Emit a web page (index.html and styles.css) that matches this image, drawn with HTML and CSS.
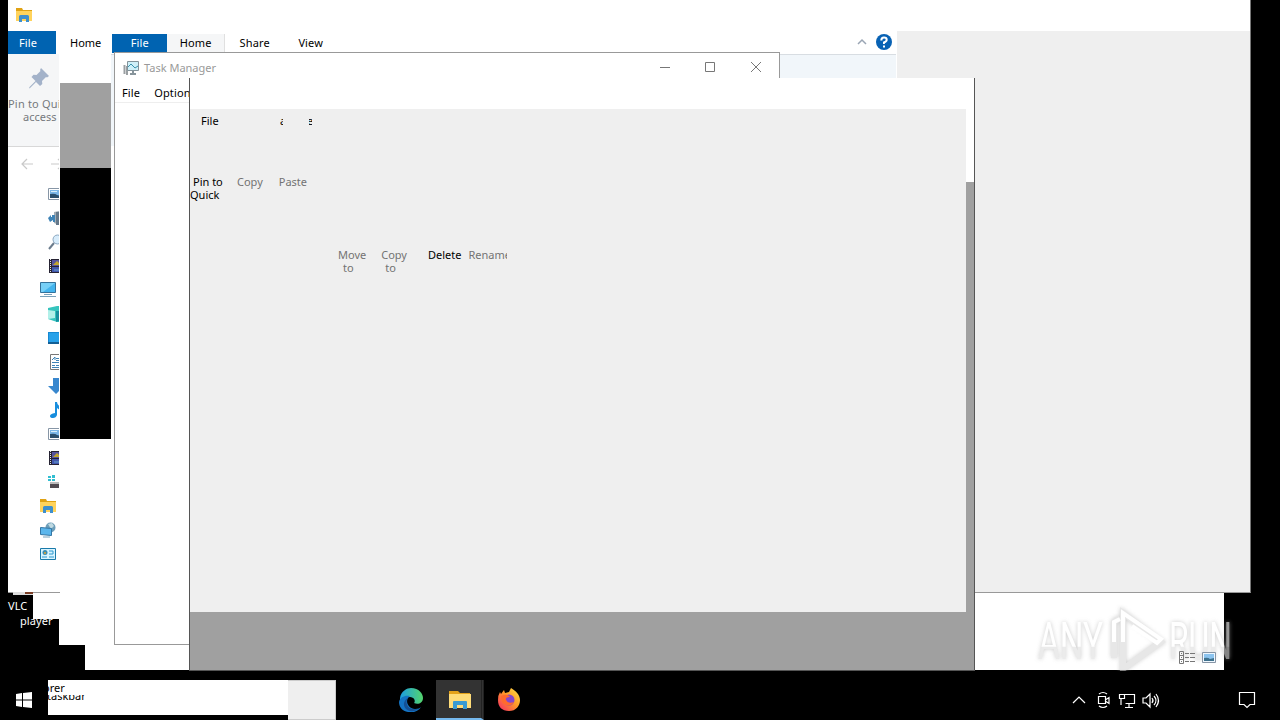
FILE: index.html
```html
<!DOCTYPE html>
<html lang="en">
<head>
<meta charset="utf-8">
<title>Desktop</title>
<link rel="stylesheet" href="styles.css">
</head>
<body>
<svg class="defs" width="0" height="0">
  <defs>
    <symbol id="folder" viewBox="0 0 16 16"><path d="M0 1h6l1 2h9v3H0z" fill="#e0a213"/><path d="M0 4h16v10H0z" fill="#ffd35c"/><path d="M3 15V9.500q0-1.500 1.500-1.500h7q1.500 0 1.500 1.500V15h-3v-3H6v3z" fill="#3e8fcd"/></symbol>
    <symbol id="picture" viewBox="0 0 16 16"><path d="M.5 2.500h15v11H.5z" fill="#fff" stroke="#8796a6"/><path d="M2 4h12v8H2z" fill="#79b6e8"/><path d="M2 8q5-1 7 1l5 1v2H2z" fill="#294e6c"/><path d="M3 5h6v1H3z" fill="#d9effa"/></symbol>
    <symbol id="film" viewBox="0 0 16 16"><path d="M1 1h15v14H1z" fill="#262333"/><path d="M2.500 1v14" stroke="#e8e8e8" stroke-dasharray="1 1"/><path d="M4 2h10v6H4z" fill="#56549d"/><path d="M4 9h10v5H4z" fill="#4257ad"/><path d="M5 7l4-4 4 4z" fill="#c1a52c"/><path d="M6 12h5" stroke="#65a2ce"/></symbol>
  </defs>
</svg>
<main class="desktop">
  <div class="shortcut"><svg class="cone" viewBox="0 0 20 3"><path d="M0 0h20v3H0z" fill="#ddd"/><path d="M12 0h8v2h-8z" fill="#7b3e25"/></svg><span class="name">VLC</span><span class="name second">player</span></div>
  <div class="trail trail-a"></div><div class="trail trail-b"></div><div class="trail trail-c"></div>

  <section class="window explorer">
    <header class="titlebar"><svg class="i16" viewBox="0 0 16 16"><use href="#folder"/></svg></header>
    <div class="body">
      <aside class="side">
        <div class="tab file">File</div>
        <div class="pin"><svg viewBox="0 0 22 22"><path d="M13 1l8 8-2 1.500-1-.5-4 4 .3 3-2.300 2-4-4-6 6-1 .5.500-1.500 6-6L3.500 10l2-2.300 3 .3 4-4-.5-1z" fill="#a3b2c9"/></svg><span>Pin to Quick</span><span class="low">access</span></div>
        <div class="history"><svg viewBox="0 0 52 12"><path d="M13 6H2M7 1L2 6l5 5M31 6h12M38 1l5 5-5 5" fill="none" stroke="#c9c9c9" stroke-width="1.200"/></svg></div>
        <ul class="tree">
          <li class="in"><svg viewBox="0 0 16 16"><use href="#picture"/></svg></li>
          <li class="in"><svg viewBox="0 0 16 16"><path d="M6 2l5-1v14l-5-2z" fill="#a3adb5"/><path d="M8 2h3v13H8z" fill="#64788a"/><path d="M0 8l3-3v2h1V5h3v7H5v-2l-3 2z" fill="#3e83b6"/></svg></li>
          <li class="in"><svg viewBox="0 0 16 16"><path d="M1 15l5-6" stroke="#6b7c8d" stroke-width="2"/><circle cx="9.500" cy="5.500" r="4.500" fill="#d7ecfb" stroke="#8ba7c0"/></svg></li>
          <li class="in"><svg viewBox="0 0 16 16"><use href="#film"/></svg></li>
          <li><svg viewBox="0 0 16 16"><path d="M.5.500h15v10H.5z" fill="#44b4ed" stroke="#35729b"/><path d="M1 1h14L3 10H1z" fill="#77d0f7"/><path d="M4 12.500h8M0 14.500h16" stroke="#79a1ba"/></svg></li>
          <li class="in"><svg viewBox="0 0 16 16"><path d="M0 2l9-2h4v16H9l-9-3z" fill="#35c4bd"/><path d="M0 4l7 1v7l-7 1z" fill="#b2f0e9"/><path d="M8 5h8v8l-8 3z" fill="#168f9f"/></svg></li>
          <li class="in"><svg viewBox="0 0 16 16"><path d="M0 2h16v12H0z" fill="#1688d2"/><path d="M1 3h10v9H1z" fill="#28a1e9"/><path d="M0 13h16" stroke="#135f95" stroke-width="2"/></svg></li>
          <li class="in"><svg viewBox="0 0 16 16"><path d="M2.500.5h12v15h-12z" fill="#fff" stroke="#777"/><path d="M4 6l3-3v3M8 4.500h5M8 6.500h5M4 8.500h8M4 11.500h3M8 11.500h5M4 13.500h8" fill="none" stroke="#3e83b6"/></svg></li>
          <li class="in"><svg viewBox="0 0 16 16"><path d="M5 0h6v8h5l-8 8-8-8h5z" fill="#3887ce"/></svg></li>
          <li class="in"><svg viewBox="0 0 16 16"><path d="M7 0h2q0 3 4 5v4L9 6v7q-1 3-4 3-3 0-3-2t5-3z" fill="#178ddd"/></svg></li>
          <li class="in"><svg viewBox="0 0 16 16"><use href="#picture"/></svg></li>
          <li class="in"><svg viewBox="0 0 16 16"><use href="#film"/></svg></li>
          <li class="in"><svg viewBox="0 0 16 16"><path d="M0 2h3v2H0zM4 1h3v3H4zM0 5h3v2H0zM4 5h3v2H4z" fill="#31bed1"/><path d="M2 8h14v3H2z" fill="#bbb"/><path d="M2 10h14v4H2z" fill="#514b50"/></svg></li>
          <li><svg viewBox="0 0 16 16"><use href="#folder"/></svg></li>
          <li><svg viewBox="0 0 16 16"><circle cx="10.500" cy="5.500" r="5" fill="#6d9eb9"/><path d="M8 2l4-1 2 3-3 3z" fill="#c0dae2"/><path d="M.5 5.500l11 1v7l-11-1z" fill="#5bb6ec" stroke="#3376a5"/><path d="M3 15h7" stroke="#78a3bc"/></svg></li>
          <li><svg viewBox="0 0 16 16"><path d="M.5 2.500h15v11H.5z" fill="#d9f4ff" stroke="#1a7aaa"/><circle cx="5" cy="6.500" r="2.500" fill="#398db4"/><circle cx="5" cy="7" r="1" fill="#e5a52d"/><path d="M2 11h5M9 5h4v3H9M9 11h5" fill="none" stroke="#2e9ad0"/></svg></li>
        </ul>
      </aside>
      <div class="blank"></div>
    </div>
  </section>

  <div class="ghost"><div class="ghost-tab">Home</div><div class="ghost-grey"></div><div class="ghost-black"></div><div class="ghost-white"></div></div>
  <section class="window ribbon">
    <nav class="tabs"><span class="tab file">File</span><span class="tab home">Home</span><span class="tab share">Share</span><span class="tab view">View</span>
      <svg class="help" viewBox="0 0 42 18"><path d="M3 10l4-4 4 4" fill="none" stroke="#9aa5b4" stroke-width="1.500"/><circle cx="29" cy="8" r="8" fill="#0862b4"/><path d="M26.300 6.500q0-3 2.700-3t2.700 2.300Q31.700 7.500 29 8.500V10M29 11.500v2" fill="none" stroke="#fff" stroke-width="2"/></svg></nav>
    <div class="strip"></div>
  </section>

  <section class="window taskman">
    <header class="tm-title"><svg class="tm-icon" viewBox="0 0 17 16"><path d="M1.500 5v9M4 6v9" fill="none" stroke="#9a9fa2" stroke-width="2"/><path d="M4.500 1.500h11v9h-11z" fill="#cef0f9" stroke="#82939b"/><path d="M5 7l3-3 4 4 3-2" fill="none" stroke="#3891ad"/><path d="M10 11v3M7 14h6" stroke="#87949b" stroke-width="2"/></svg><span>Task Manager</span>
      <svg class="controls" viewBox="0 0 104 12"><path d="M1 6.500h10M46.500 1.500h9v9h-9zM92 1l10 10M102 1L92 11" fill="none" stroke="#777"/></svg></header>
    <nav class="tm-menu"><span>File</span><span>Options</span></nav>
  </section>

  <section class="window front">
    <header class="front-title"></header>
    <div class="front-body">
      <div class="commands">
        <div class="row first"><span class="cmd">File</span><span class="bit bit-a"><b>a</b></span><span class="bit bit-e"><b>e</b></span></div>
        <div class="row second"><span class="cmd pinq">Pin to<br><i>Quick</i></span><span class="cmd off">Copy</span><span class="cmd off paste">Paste</span></div>
        <div class="row third"><span class="cmd off">Move<br><i>to</i></span><span class="cmd off copyto">Copy<br><i>to</i></span><span class="cmd del">Delete</span><span class="cmd off ren">Rename</span></div>
      </div>
      <div class="edge"></div>
    </div>
    <footer class="front-foot"></footer>
  </section>

  <svg class="watermark" viewBox="0 0 210 72">
    <defs><linearGradient id="fade" x1="0" y1="0" x2="0" y2="1"><stop offset=".58" stop-color="#fff"/><stop offset=".6" stop-color="#dedede"/></linearGradient></defs>
    <g class="letters"><text x="6" y="55" textLength="65" lengthAdjust="spacingAndGlyphs">ANY</text><text x="137" y="55" textLength="63" lengthAdjust="spacingAndGlyphs">RUN</text></g>
    <g class="play"><path d="M82 54V18l6-4M91 9v56l38-27z"/></g>
    <path class="play-line" d="M82 38V18l6-3M91 38V9l38 26-4 4-25-17"/>
  </svg>
  <svg class="views" viewBox="0 0 38 14"><path d="M.5.500h4v12h-4zM.5 4.500h4M.5 8.500h4M2 2.500h1M2 6.500h1M2 10.500h1M6 2.500h4M11 2.500h5M6 6.500h4M11 6.500h5M6 10.500h4M11 10.500h5" fill="none" stroke="#777"/><path d="M23.500 1.500h13v10h-13z" fill="#eef7ff" stroke="#8795a5"/><path d="M25 3h10v7H25z" fill="#8cc4ef"/><path d="M25 7q4-1 6 1l4-1v3H25z" fill="#3e718d"/></svg>

  <footer class="taskbar">
    <svg class="start" viewBox="0 0 16 16"><path d="M0 2l6-1v6.500H0zM7 1l9-1v7.500H7zM0 8.500h6V15l-6-1zM7 8.500h9V16l-9-1z" fill="#fff"/></svg>
    <div class="tip"><span class="t1">orer</span><span class="t2"><b>taskbar</b></span></div><div class="tip-end"></div>
    <svg class="edge-icon" viewBox="0 0 24 24"><defs><linearGradient id="eg" x1="0" x2="1"><stop stop-color="#1b9de2"/><stop offset="1" stop-color="#54d56c"/></linearGradient></defs><path d="M1 10C2 3 8 0 12 0c8 0 12 6 12 10 0 5-5 7-9 5 2-2 0-6-4-6-5 0-9 3-10 6z" fill="url(#eg)"/><path d="M0 14c1-5 6-7 11-6-6 4-2 13 5 13 3 0 5-1 6-2-3 5-9 6-13 5-6-1-9-5-9-10z" fill="#1474c4"/><path d="M9 10c-4 5 0 13 10 11-6 5-15 1-14-6 1-3 2-4 4-5z" fill="#155094"/></svg>
    <div class="task-active"><svg viewBox="0 0 22 18"><path d="M0 0h9l2 2h10v4H0z" fill="#e4a21a"/><path d="M0 3h22v14H0z" fill="#ffdc78"/><path d="M4 18v-7q0-1 1-1h12q1 0 1 1v7h-4v-4H8v4z" fill="#399bd2"/></svg></div>
    <svg class="fox" viewBox="0 0 24 24"><defs><linearGradient id="ff" x1="1" y1="0" x2="0" y2="1"><stop stop-color="#ffe64b"/><stop offset=".45" stop-color="#ff9b28"/><stop offset="1" stop-color="#f52667"/></linearGradient></defs><path d="M3 4l1 2 3-4 1 3 4-1 2-4c5 3 9 7 9 12 0 6-4 11-11 11C5 23 1 19 1 12q0-5 2-8z" fill="url(#ff)"/><circle cx="12" cy="12" r="5.500" fill="#8547cc"/><path d="M4 8q6-3 9 1-5 0-4 3 2 4 8 2-3 5-8 3-5-2-5-9z" fill="#ff6b2d"/></svg>
    <svg class="tray" viewBox="0 0 92 22"><g fill="none" stroke="#fff" stroke-width="1.200"><path d="M1 14l6-6 6 6M27 5q4-3 8 0M27 17q4 3 8 0M26.500 7.500h7v7h-7zM34 10.500l3-2v6l-3-2M50.500 5.500h12v9h-9M57 15v3M53 18.500h8M47.500 5.500h5v4h-5zM49 10v6M71 9h3l4-4v13l-4-4h-3zM80 9q2 2.500 0 5M82 7q4 4.500 0 9M84 5q5 6.500 0 13"/></g></svg>
    <svg class="note" viewBox="0 0 18 18"><path d="M1.500 1.500h15v12H12l-3 3-3-3H1.500z" fill="none" stroke="#fff" stroke-width="1.200"/></svg>
  </footer>
</main>
</body>
</html>
```
FILE: styles.css
```css
* { box-sizing: border-box; }
body { margin: 0; font: 11px/13px "Noto Sans", "Open Sans", sans-serif; color: #000; }
i { font-style: normal; }
svg { display: block; flex: none; }
.defs { position: absolute; }
.desktop { position: relative; width: 1280px; height: 720px; overflow: hidden; background: #000; }
.window { position: absolute; overflow: hidden; background: #fff; }

.shortcut { position: absolute; left: 8px; top: 592px; width: 52px; color: #fff; z-index: 1; }
.cone { width: 20px; height: 3px; margin-left: 5px; }
.name { display: block; padding-top: 4px; letter-spacing: .1px; }
.second { padding: 2px 0 0 12px; }
.trail { position: absolute; background: #fff; }
.trail-a { left: 33px; top: 590px; width: 40px; height: 29px; }
.trail-b { left: 59px; top: 590px; width: 60px; height: 55px; }
.trail-c { left: 85px; top: 590px; width: 1139px; height: 80px; }

.explorer { left: 8px; top: 0; width: 1243px; height: 593px; border-bottom: 1px solid #999; border-right: 1px solid #777; }
.titlebar { height: 31px; padding: 7px 8px; }
.i16 { width: 16px; height: 16px; }
.body { display: flex; height: 561px; }
.side { width: 51px; overflow: hidden; }
.blank { flex: 1; margin-left: 838px; background: #efefef; }
.tab { display: flex; align-items: center; justify-content: center; letter-spacing: .15px; }
.file { background: #0063b1; color: #fff; }
.side .file { width: 48px; height: 23px; padding-right: 8px; }
.pin { height: 93px; padding-top: 13px; background: #f5f6f7; border-bottom: 1px solid #d8d8d8; color: #75797d; white-space: nowrap; }
.pin svg { width: 22px; height: 22px; margin: 0 0 8px 20px; }
.pin span { display: block; letter-spacing: .2px; }
.pin .low { padding-left: 15px; letter-spacing: 0; }
.history { height: 36px; padding: 11px 0 0 12px; }
.history svg { width: 52px; height: 12px; }
.tree { list-style: none; margin: 0; padding: 0 0 0 32px; }
.tree li { height: 24px; padding-top: 3px; }
.tree .in { padding-left: 8px; width: 19px; overflow: hidden; }
.tree svg { width: 16px; height: 16px; }

.ghost { position: absolute; left: 60px; top: 1px; width: 51px; height: 643px; display: flex; flex-direction: column; background: #fff; }
.ghost-tab { height: 82px; padding: 35px 0 0 10px; }
.ghost-grey { height: 85px; background: #a0a0a0; }
.ghost-black { height: 271px; background: #000; }
.ghost-white { flex: 1; }

.ribbon { left: 111px; top: 0; width: 786px; height: 670px; padding-top: 34px; }
.tabs { display: flex; height: 20px; padding-left: 1px; }
.tabs .tab { height: 19px; padding-bottom: 2px; }
.tabs .file { width: 56px; }
.tabs .home { width: 58px; background: #f5f6f7; border-right: 1px solid #e0e0e0; }
.tabs .share { width: 58px; padding-left: 2px; }
.tabs .view { width: 54px; padding-left: 3px; }
.help { width: 42px; height: 18px; margin-left: 519px; }
.strip { height: 92px; border-top: 1px solid #d8dde2; background: #f1f6fa; margin-right: 1px; }

.taskman { left: 114px; top: 52px; width: 666px; height: 593px; border: 1px solid #999; }
.tm-title { display: flex; align-items: center; height: 30px; padding: 0 0 2px 8px; color: #999; }
.tm-icon { width: 17px; height: 16px; margin: 2px 4px 0 0; }
.controls { width: 104px; height: 12px; margin: -1px 16px 0 auto; }
.tm-menu { display: flex; gap: 14px; height: 20px; padding: 3px 0 0 7px; border-bottom: 1px solid #eee; letter-spacing: .15px; }

.front { left: 189px; top: 78px; width: 786px; height: 593px; border: solid #555; border-width: 0 1px 1px; }
.front-title { height: 31px; }
.front-body { display: flex; height: 503px; }
.commands { width: 776px; background: #efefef; }
.edge { flex: 1; border-top: 73px solid #fff; background: #a0a0a0; }
.front-foot { height: 58px; background: #a0a0a0; }
.row { display: flex; align-items: flex-start; }
.first { height: 66px; padding: 5px 0 0 11px; }
.first .cmd { width: 79px; }
.second.row { height: 73px; padding: 0; }
.third { padding-left: 148px; }
.cmd { display: block; white-space: nowrap; }
.pinq { width: 47px; padding-left: 3px; }
.pinq i { margin-left: -3px; }
.off { color: #737373; }
.paste { margin-left: 16px; }
.third i { margin-left: 5px; }
.copyto { margin-left: 15px; }
.copyto i { margin-left: 4px; }
.del { margin-left: 21px; }
.ren { width: 39px; margin-left: 7px; overflow: hidden; }
.bit { display: flex; overflow: hidden; width: 3px; height: 13px; }
.bit b { font-weight: 400; }
.bit-e { margin-left: 26px; }
.bit-e b { margin-left: -2px; }

.views { position: absolute; left: 1179px; top: 651px; width: 38px; height: 14px; }
.watermark { position: absolute; left: 1032px; top: 604px; width: 210px; height: 72px; opacity: .6; }
.letters { font: 51px Roboto, sans-serif; fill: url(#fade); filter: drop-shadow(0 0 2px #aaa); }
.play { fill: none; stroke: #d8d8d8; stroke-width: 6; filter: drop-shadow(0 0 2px #aaa); }
.play-line { fill: none; stroke: #fff; stroke-width: 4; }

.taskbar { position: absolute; left: 0; top: 671px; width: 1280px; height: 49px; padding-top: 9px; display: flex; align-items: flex-start; background: #000; }
.start { width: 16px; height: 16px; margin: 12px 16px 0; }
.tip { width: 240px; height: 35px; background: #fff; overflow: hidden; }
.t1 { display: block; height: 14px; margin: 1px 0 0 -5px; }
.t2 { display: block; height: 6px; overflow: hidden; }
.t2 b { display: block; margin-top: -6px; margin-left: -1px; font-weight: 400; }
.tip-end { width: 48px; height: 40px; background: #efefef; border: 1px solid #ccc; border-left: 0; }
.edge-icon { width: 24px; height: 24px; margin: 8px 0 0 63px; }
.task-active { width: 48px; height: 40px; margin-left: 13px; padding: 11px 13px 0; background: #333; border-bottom: 2px solid #76b9ed; border-right: 3px double #222; }
.task-active svg { width: 22px; height: 18px; }
.fox { width: 24px; height: 24px; margin: 8px 0 0 13px; }
.tray { width: 92px; height: 22px; margin: 9px 0 0 551px; }
.note { width: 18px; height: 18px; margin: 11px 0 0 74px; }
```
